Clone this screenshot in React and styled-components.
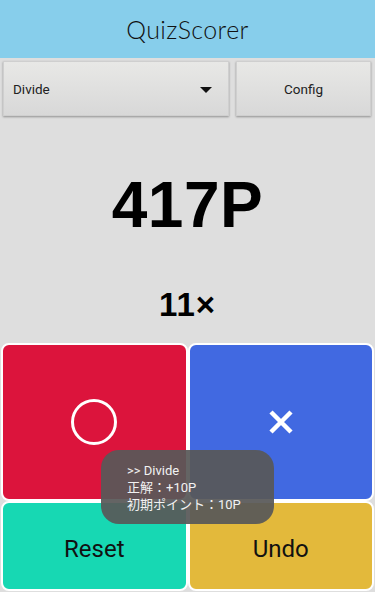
import React from "react";
import styled, { createGlobalStyle } from "styled-components";

const GlobalStyle = createGlobalStyle`
  html, body {
    margin: 0;
    padding: 0;
    background: #dedede;
  }
  * {
    box-sizing: border-box;
  }
`;

const Screen = styled.div`
  position: relative;
  width: 375px;
  height: 592px;
  display: flex;
  flex-direction: column;
  background: #dedede;
  overflow: hidden;
  font-family: Roboto, "Noto Sans CJK JP", sans-serif;
`;

const Header = styled.header`
  height: 58px;
  background: #87ceeb;
  display: flex;
  align-items: center;
  justify-content: center;
`;

const Title = styled.h1`
  margin: 0;
  font-family: Lato, "Noto Sans", sans-serif;
  font-weight: 300;
  font-size: 25px;
  letter-spacing: 0.4px;
  color: #111;
`;

const Controls = styled.div`
  display: flex;
  gap: 7px;
  padding: 3px 4px 3px 3px;
`;

const RaisedButton = styled.div`
  height: 55px;
  ${(p) => (p.width ? `width: ${p.width}px; flex: none;` : "flex: 1;")}
  display: flex;
  align-items: center;
  justify-content: ${(p) => (p.spread ? "space-between" : "center")};
  padding: ${(p) => (p.spread ? "0 16px 0 9px" : "0")};
  background: linear-gradient(#e8e8e6, #d8d8d8);
  border: 1px solid #cfcfcf;
  box-shadow: 0 1px 2px rgba(0, 0, 0, 0.35);
  font-size: 13.5px;
  color: #222;
`;

const Caret = styled.span`
  width: 0;
  height: 0;
  border-left: 6px solid transparent;
  border-right: 6px solid transparent;
  border-top: 6px solid #111;
  margin-top: 2px;
`;

const Scoreboard = styled.main`
  flex: 1;
  display: flex;
  flex-direction: column;
  align-items: center;
  padding-top: 49px;
`;

const Points = styled.div`
  font-family: "Liberation Sans", Arial, sans-serif;
  font-weight: 700;
  font-size: 64px;
  line-height: 74px;
  letter-spacing: 0.5px;
  color: #000;
`;

const Count = styled.div`
  margin-top: 43px;
  font-family: "Liberation Sans", Arial, sans-serif;
  font-weight: 700;
  font-size: 33px;
  line-height: 40px;
  letter-spacing: 1px;
  color: #000;
`;

const Pad = styled.div`
  height: 250px;
  display: grid;
  grid-template-columns: 1fr 1fr;
  grid-template-rows: 158px 1fr;
  padding: 1px;
`;

const PadButton = styled.div`
  background: ${(p) => p.color};
  border: 2px solid #fff;
  border-radius: 8px;
  display: flex;
  align-items: center;
  justify-content: center;
  padding-top: ${(p) => (p.label ? "6px" : "0")};
  font-size: 24px;
  color: #111;
`;

const Toast = styled.div`
  position: absolute;
  left: 101px;
  top: 450px;
  width: 173px;
  height: 74px;
  border-radius: 18px;
  background: rgba(88, 88, 88, 0.93);
  padding: 12px 0 0 26px;
  color: #f2f2f2;
  font-size: 13px;
  line-height: 17px;
`;

export default function App() {
  return (
    <Screen>
      <GlobalStyle />
      <Header>
        <Title>QuizScorer</Title>
      </Header>
      <Controls>
        <RaisedButton width={226} spread>
          <span>Divide</span>
          <Caret />
        </RaisedButton>
        <RaisedButton>Config</RaisedButton>
      </Controls>
      <Scoreboard>
        <Points>417P</Points>
        <Count>11×</Count>
      </Scoreboard>
      <Pad>
        <PadButton color="#dc143c">
          <svg width="48" height="48" viewBox="0 0 48 48">
            <circle cx="24" cy="24" r="21.5" fill="none" stroke="#fff" strokeWidth="3" />
          </svg>
        </PadButton>
        <PadButton color="#4169e1">
          <svg width="26" height="26" viewBox="0 0 26 26">
            <path d="M3 3 L23 23 M23 3 L3 23" stroke="#fff" strokeWidth="4.5" />
          </svg>
        </PadButton>
        <PadButton color="#17d8b3" label>Reset</PadButton>
        <PadButton color="#e3b93b" label>Undo</PadButton>
      </Pad>
      <Toast>
        <div>&gt;&gt; Divide</div>
        <div>正解：+10P</div>
        <div>初期ポイント：10P</div>
      </Toast>
    </Screen>
  );
}
